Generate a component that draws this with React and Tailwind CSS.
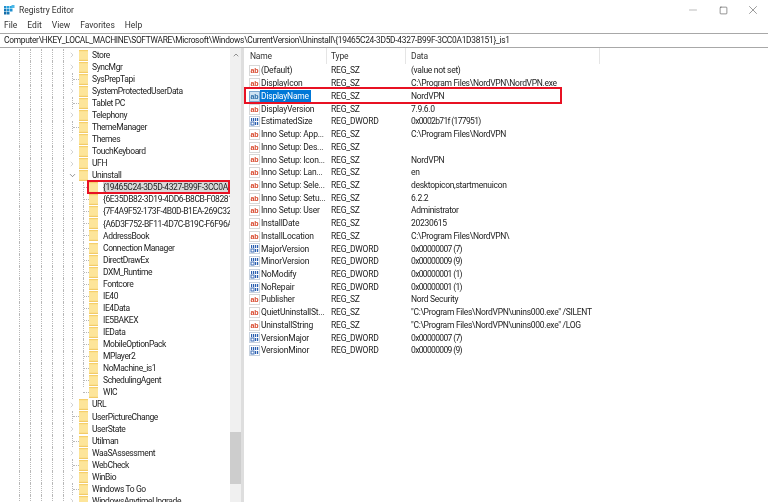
import React from 'react';
import { ChevronRight, ChevronDown, ChevronUp, Minus, Square, X } from 'lucide-react';

const treeRows = [
  { name: 'Store', arrow: true },
  { name: 'SyncMgr', arrow: true },
  { name: 'SysPrepTapi' },
  { name: 'SystemProtectedUserData', arrow: true },
  { name: 'Tablet PC' },
  { name: 'Telephony', arrow: true },
  { name: 'ThemeManager' },
  { name: 'Themes', arrow: true },
  { name: 'TouchKeyboard', arrow: true },
  { name: 'UFH', arrow: true },
  { name: 'Uninstall', open: true },
  { name: '{19465C24-3D5D-4327-B99F-3CC0A1D38151}_is1', child: true, selected: true },
  { name: '{6E35DB82-3D19-4DD6-B8CB-F08281', child: true },
  { name: '{7F4A9F52-173F-4B0D-B1EA-269C32', child: true },
  { name: '{A6D3F752-BF11-4D7C-B19C-F6F96A', child: true },
  { name: 'AddressBook', child: true },
  { name: 'Connection Manager', child: true },
  { name: 'DirectDrawEx', child: true },
  { name: 'DXM_Runtime', child: true },
  { name: 'Fontcore', child: true },
  { name: 'IE40', child: true },
  { name: 'IE4Data', child: true },
  { name: 'IE5BAKEX', child: true },
  { name: 'IEData', child: true },
  { name: 'MobileOptionPack', child: true },
  { name: 'MPlayer2', child: true },
  { name: 'NoMachine_is1', child: true },
  { name: 'SchedulingAgent', child: true },
  { name: 'WIC', child: true, last: true },
  { name: 'URL', arrow: true },
  { name: 'UserPictureChange' },
  { name: 'UserState', arrow: true },
  { name: 'Utilman' },
  { name: 'WaaSAssessment', arrow: true },
  { name: 'WebCheck' },
  { name: 'WinBio', arrow: true },
  { name: 'Windows To Go' },
  { name: 'WindowsAnytimeUpgrade', arrow: true },
];

const values = [
  ['(Default)', 'REG_SZ', '(value not set)'],
  ['DisplayIcon', 'REG_SZ', 'C:\\Program Files\\NordVPN\\NordVPN.exe'],
  ['DisplayName', 'REG_SZ', 'NordVPN'],
  ['DisplayVersion', 'REG_SZ', '7.9.6.0'],
  ['EstimatedSize', 'REG_DWORD', '0x0002b71f (177951)'],
  ['Inno Setup: App...', 'REG_SZ', 'C:\\Program Files\\NordVPN'],
  ['Inno Setup: Des...', 'REG_SZ', ''],
  ['Inno Setup: Icon...', 'REG_SZ', 'NordVPN'],
  ['Inno Setup: Lan...', 'REG_SZ', 'en'],
  ['Inno Setup: Sele...', 'REG_SZ', 'desktopicon,startmenuicon'],
  ['Inno Setup: Setu...', 'REG_SZ', '6.2.2'],
  ['Inno Setup: User', 'REG_SZ', 'Administrator'],
  ['InstallDate', 'REG_SZ', '20230615'],
  ['InstallLocation', 'REG_SZ', 'C:\\Program Files\\NordVPN\\'],
  ['MajorVersion', 'REG_DWORD', '0x00000007 (7)'],
  ['MinorVersion', 'REG_DWORD', '0x00000009 (9)'],
  ['NoModify', 'REG_DWORD', '0x00000001 (1)'],
  ['NoRepair', 'REG_DWORD', '0x00000001 (1)'],
  ['Publisher', 'REG_SZ', 'Nord Security'],
  ['QuietUninstallSt...', 'REG_SZ', '"C:\\Program Files\\NordVPN\\unins000.exe" /SILENT'],
  ['UninstallString', 'REG_SZ', '"C:\\Program Files\\NordVPN\\unins000.exe" /LOG'],
  ['VersionMajor', 'REG_DWORD', '0x00000007 (7)'],
  ['VersionMinor', 'REG_DWORD', '0x00000009 (9)'],
];

function AppIcon() {
  return (
    <svg width="11" height="11" viewBox="0 0 11 11" className="shrink-0">
      <rect x="0" y="1" width="2.5" height="2.5" fill="#1f8fd0" />
      <rect x="3" y="1" width="2.5" height="2.5" fill="#2aa5dd" />
      <rect x="6" y="1" width="2.5" height="2.5" fill="#2aa5dd" />
      <rect x="0" y="4" width="2.5" height="2.5" fill="#1577b5" />
      <rect x="3" y="4" width="2.5" height="2.5" fill="#1f8fd0" />
      <rect x="6" y="4" width="2.5" height="2.5" fill="#1f8fd0" />
      <rect x="0" y="7" width="2.5" height="2.5" fill="#136ba5" />
      <rect x="3" y="7" width="2.5" height="2.5" fill="#1577b5" />
      <rect x="7.5" y="0" width="3" height="3" fill="#4db8e8" />
    </svg>
  );
}

function Folder() {
  return (
    <svg width="9" height="11" viewBox="0 0 9 11" className="shrink-0">
      <rect x="0" y="0" width="9" height="11" fill="#fde59a" />
      <rect x="0" y="0" width="9" height="1.2" fill="#f6cf6b" />
      <rect x="0" y="9.8" width="9" height="1.2" fill="#f2cb68" />
    </svg>
  );
}

function StringIcon({ selected }) {
  return (
    <svg width="11" height="11" viewBox="0 0 11 11" className="shrink-0">
      <rect x="0.5" y="0.5" width="10" height="10" fill={selected ? '#cfe2f3' : '#fff'} stroke={selected ? '#7fa8d0' : '#d8d8d8'} />
      <text x="5.5" y="7.6" textAnchor="middle" fontSize="7" fontWeight="700" fontFamily="Liberation Sans, sans-serif" fill={selected ? '#2d6da8' : '#d8472b'}>ab</text>
    </svg>
  );
}

function DwordIcon() {
  const top = [2, 4, 6, 8];
  return (
    <svg width="11" height="11" viewBox="0 0 11 11" className="shrink-0">
      <rect x="0.5" y="0.5" width="10" height="10" fill="#fff" stroke="#c8d2de" />
      {top.map((x) => (
        <rect key={x} x={x} y="2" width="1.2" height="3" fill="#2a5fb0" />
      ))}
      <rect x="2" y="6" width="3" height="3" fill="none" stroke="#2a5fb0" strokeWidth="0.9" />
      <rect x="6" y="6" width="1.2" height="3" fill="#2a5fb0" />
      <rect x="8" y="6" width="1.2" height="3" fill="#2a5fb0" />
    </svg>
  );
}

function Guide({ className }) {
  return <div className={`h-full shrink-0 border-l border-dotted border-[#b8b8b8] ${className}`} />;
}

function TreeRow({ row }) {
  return (
    <div className="h-[12.07px] flex items-center pl-[19px] whitespace-nowrap">
      <Guide className="w-[11px]" />
      <Guide className="w-[11px]" />
      <Guide className="w-[11px]" />
      <Guide className="w-[11px]" />
      <Guide className="w-[9px]" />
      {row.child ? (
        <>
          <Guide className="w-[11px]" />
          <div className={`w-[6px] h-full shrink-0 flex items-center border-l border-dotted border-[#b8b8b8] ${row.last ? 'border-l-0' : ''}`}>
            <div className="w-full border-t border-dotted border-[#b8b8b8]" />
          </div>
        </>
      ) : (
        <div className="w-[7px] h-full shrink-0 flex items-center">
          {row.arrow && <ChevronRight size={8} strokeWidth={1.5} className="text-[#a6a6a6] -ml-[4px]" />}
          {row.open && <ChevronDown size={9} strokeWidth={1.5} className="text-[#404040] -ml-[4px]" />}
          {!row.arrow && !row.open && (
            <div className="h-full w-full flex items-center border-l border-dotted border-[#b8b8b8]">
              <div className="w-full border-t border-dotted border-[#b8b8b8]" />
            </div>
          )}
        </div>
      )}
      <Folder />
      <div className={`h-full flex items-center ${row.child ? 'ml-[5px]' : 'ml-[4px]'} ${row.selected ? 'bg-[#d9d9d9] pr-2' : ''}`}>
        <span className="text-[8.5px] tracking-[-0.4px] text-[#222]">{row.name}</span>
      </div>
    </div>
  );
}

function ValueRow({ row }) {
  const selected = row[0] === 'DisplayName';
  const isHex = row[2].startsWith('0x');
  return (
    <div className="h-[12.72px] flex items-center pl-[5px] whitespace-nowrap relative">
      {row[1] === 'REG_SZ' ? <StringIcon selected={selected} /> : <DwordIcon />}
      <div className="w-[71px] shrink-0">
        <span className={`inline-block px-[1px] leading-[12px] ${selected ? 'bg-[#0078d7] text-white pr-[2px]' : ''}`}>{row[0]}</span>
      </div>
      <div className="w-[80px] shrink-0">{row[1]}</div>
      <div className={isHex ? 'tracking-[-0.65px]' : 'tracking-[-0.3px]'}>{row[2]}</div>
      {selected && <div className="absolute left-0 -top-[3px] w-[318px] h-[17px] border-2 border-[#e81123]" />}
    </div>
  );
}

export default function App() {
  return (
    <div className="w-[768px] h-[502px] bg-white overflow-hidden flex flex-col text-[#222] font-['Roboto','Lato',sans-serif] blur-[0.4px]">
      <div className="h-[19px] flex items-center shrink-0 pl-[4px] pt-[1px]">
        <AppIcon />
        <span className="ml-[4px] text-[8.5px] text-[#333]">Registry Editor</span>
        <div className="ml-auto flex items-center">
          <div className="w-[30px] flex justify-center"><Minus size={12} strokeWidth={1} className="text-[#777]" /></div>
          <div className="w-[30px] flex justify-center"><Square size={9} strokeWidth={1.5} className="text-[#444]" /></div>
          <div className="w-[30px] flex justify-center"><X size={14} strokeWidth={1} className="text-[#555]" /></div>
        </div>
      </div>
      <div className="h-[13px] flex items-center shrink-0 pl-[4px] gap-[10px] text-[8.5px] text-[#333]">
        <span>File</span>
        <span>Edit</span>
        <span>View</span>
        <span>Favorites</span>
        <span>Help</span>
      </div>
      <div className="h-[15px] mt-[1px] shrink-0 flex items-center pl-[4px] border-y border-[#a8a8a8] text-[8.4px] tracking-[-0.28px] text-[#222] whitespace-nowrap">
        Computer\HKEY_LOCAL_MACHINE\SOFTWARE\Microsoft\Windows\CurrentVersion\Uninstall\{'{'}19465C24-3D5D-4327-B99F-3CC0A1D38151{'}'}_is1
      </div>
      <div className="flex-1 flex min-h-0">
        <div className="w-[230px] shrink-0 overflow-hidden pt-[1px] relative">
          {treeRows.map((row) => (
            <TreeRow key={row.name} row={row} />
          ))}
          <div className="absolute left-[87px] top-[132px] right-0 h-[14px] border-2 border-[#e81123]" />
        </div>
        <div className="w-[11px] shrink-0 bg-[#f0f0f0] flex flex-col items-center">
          <ChevronUp size={8} strokeWidth={2} className="text-[#606060] mt-[3px]" />
          <div className="w-full h-[52px] bg-[#cdcdcd] mt-[373px]" />
        </div>
        <div className="w-[3px] shrink-0 bg-[#dedede]" />
        <div className="flex-1 min-w-0 text-[8.5px] tracking-[-0.2px] text-[#222]">
          <div className="h-[16px] flex items-center text-[#333]">
            <div className="w-[83px] h-full pl-[6px] flex items-center border-r border-[#e5e5e5]">Name</div>
            <div className="w-[79px] h-full pl-[4px] flex items-center border-r border-[#e5e5e5]">Type</div>
            <div className="w-[194px] h-full pl-[5px] flex items-center border-r border-[#e5e5e5]">Data</div>
          </div>
          <div className="pt-[0.5px]">
            {values.map((row) => (
              <ValueRow key={row[0]} row={row} />
            ))}
          </div>
        </div>
      </div>
    </div>
  );
}
